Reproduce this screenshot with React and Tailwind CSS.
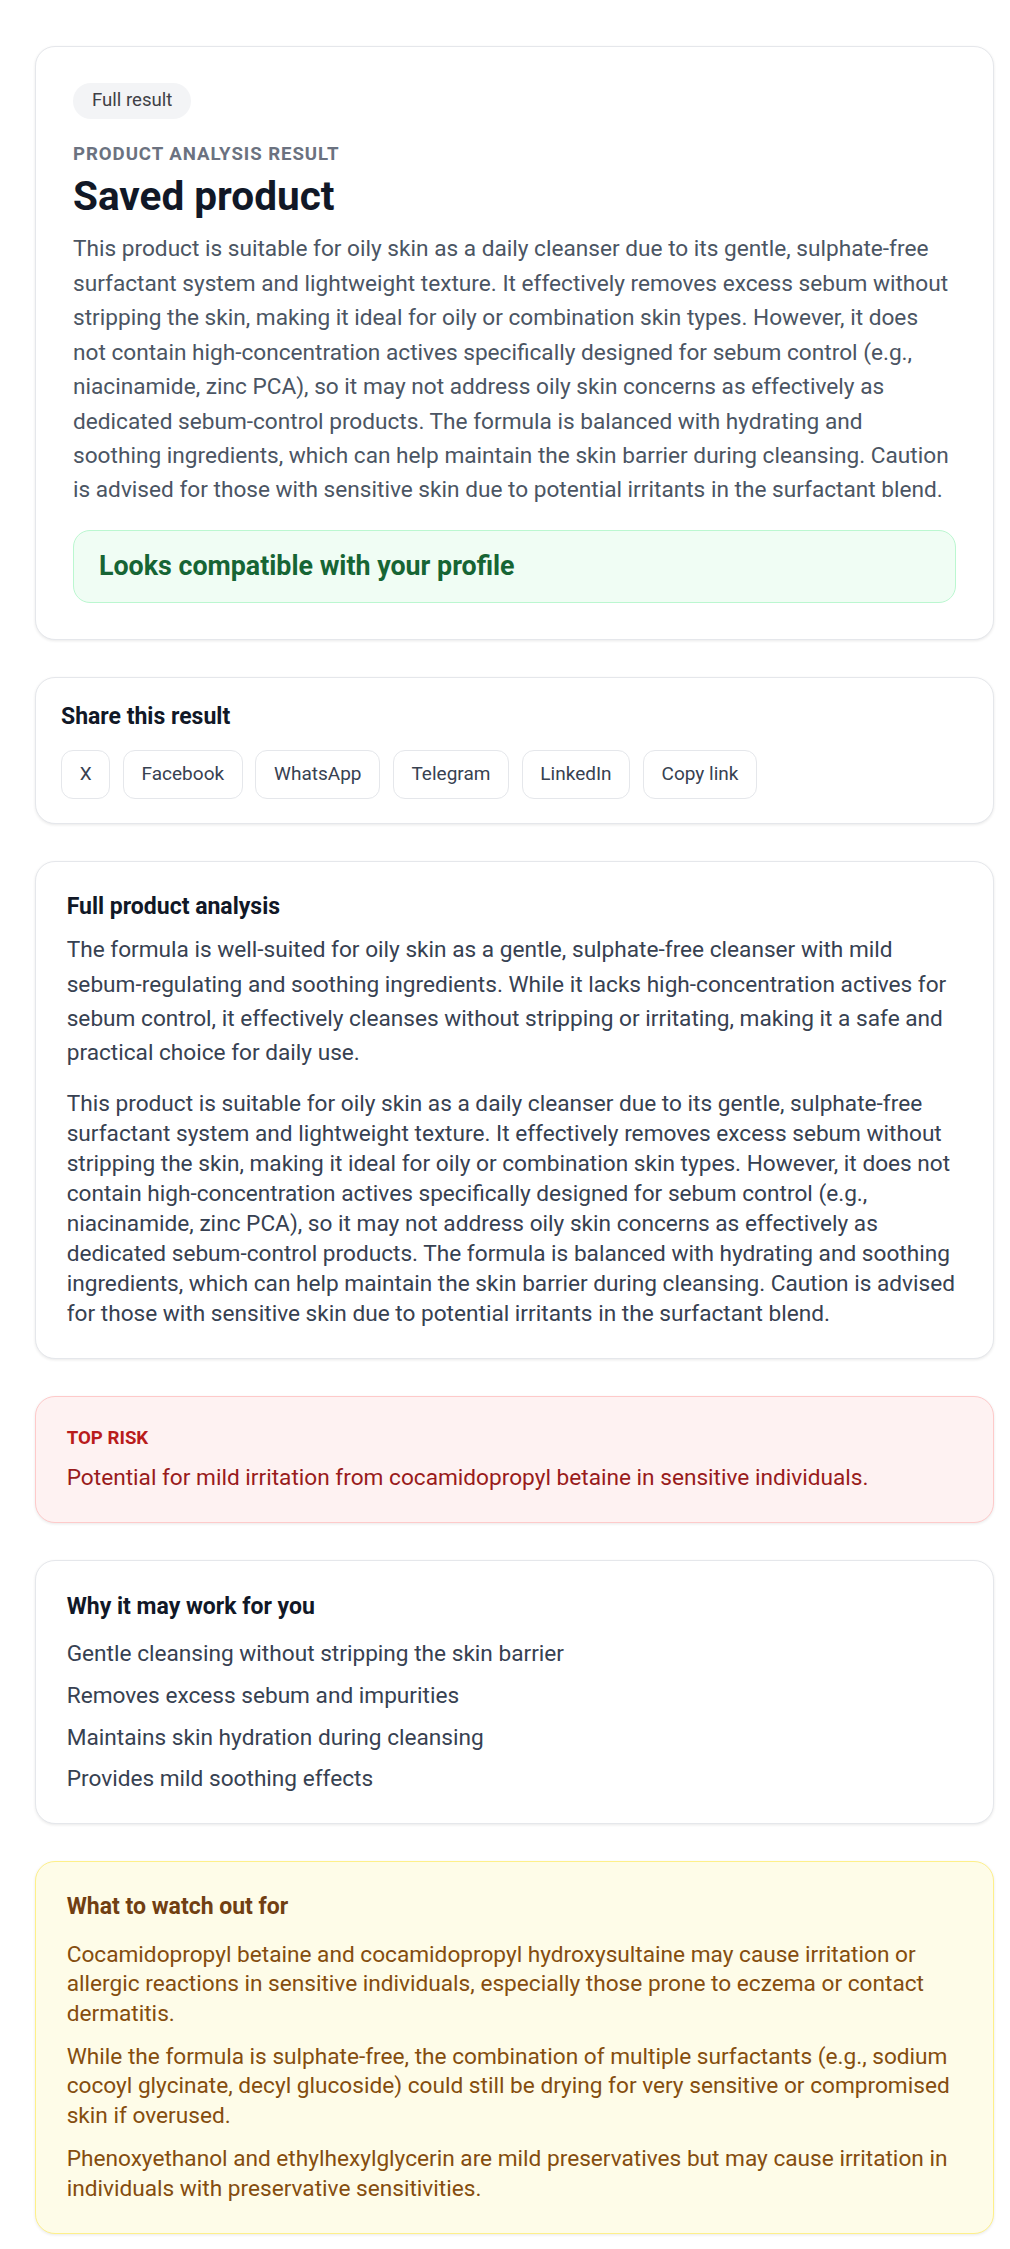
const summary =
  'This product is suitable for oily skin as a daily cleanser due to its gentle, sulphate-free surfactant system and lightweight texture. It effectively removes excess sebum without stripping the skin, making it ideal for oily or combination skin types. However, it does not contain high-concentration actives specifically designed for sebum control (e.g., niacinamide, zinc PCA), so it may not address oily skin concerns as effectively as dedicated sebum-control products. The formula is balanced with hydrating and soothing ingredients, which can help maintain the skin barrier during cleansing. Caution is advised for those with sensitive skin due to potential irritants in the surfactant blend.';

const verdict =
  'The formula is well-suited for oily skin as a gentle, sulphate-free cleanser with mild sebum-regulating and soothing ingredients. While it lacks high-concentration actives for sebum control, it effectively cleanses without stripping or irritating, making it a safe and practical choice for daily use.';

const shareTargets = ['X', 'Facebook', 'WhatsApp', 'Telegram', 'LinkedIn', 'Copy link'];

const benefits = [
  'Gentle cleansing without stripping the skin barrier',
  'Removes excess sebum and impurities',
  'Maintains skin hydration during cleansing',
  'Provides mild soothing effects',
];

const cautions = [
  'Cocamidopropyl betaine and cocamidopropyl hydroxysultaine may cause irritation or allergic reactions in sensitive individuals, especially those prone to eczema or contact dermatitis.',
  'While the formula is sulphate-free, the combination of multiple surfactants (e.g., sodium cocoyl glycinate, decyl glucoside) could still be drying for very sensitive or compromised skin if overused.',
  'Phenoxyethanol and ethylhexylglycerin are mild preservatives but may cause irritation in individuals with preservative sensitivities.',
];

function Card({ className = '', children }) {
  return (
    <section className={`rounded-[20px] border shadow-[0_1px_3px_rgba(0,0,0,0.09)] ${className}`}>
      {children}
    </section>
  );
}

export default function App() {
  return (
    <div className="min-h-screen bg-white font-['Segoe_UI',Roboto,sans-serif] antialiased">
      <main className="flex flex-col gap-[37px] pl-[35px] pr-[16px] pt-[46px] pb-[14px]">
        {/* Result header */}
        <Card className="border-[#e5e7eb] bg-white px-[37px] py-[36px]">
          <span className="flex h-[36px] w-fit items-center rounded-full bg-[#f3f4f6] px-[19px] text-[18.6px] text-[#3f3f46]">
            Full result
          </span>
          <p className="mt-[24px] text-[18.65px] leading-[22.4px] font-bold uppercase tracking-[0.05em] text-[#6b7280]">
            Product analysis result
          </p>
          <h1 className="mt-[7px] text-[40.5px] leading-[48px] font-bold text-[#111827]">Saved product</h1>
          <p className="mt-[12px] text-[22.65px] leading-[34.44px] text-[#4b5563]">{summary}</p>
          <div className="mt-[22px] rounded-[17px] border border-[#bbf7d0] bg-[#f0fdf4] px-[25px] py-[20px]">
            <p className="text-[26.8px] leading-[31px] font-bold text-[#166534]">Looks compatible with your profile</p>
          </div>
        </Card>

        {/* Share */}
        <Card className="border-[#e5e7eb] bg-white px-[25px] pt-[25px] pb-[24px]">
          <h2 className="text-[23px] leading-[27.6px] font-bold text-[#111827]">Share this result</h2>
          <div className="mt-[19.4px] flex flex-wrap gap-[12.6px]">
            {shareTargets.map((name) => (
              <button
                key={name}
                type="button"
                className="flex h-[49px] items-center rounded-[12px] border border-[#e5e7eb] bg-white px-[17.7px] text-[19px] text-[#374151]"
              >
                {name}
              </button>
            ))}
          </div>
        </Card>

        {/* Full analysis */}
        <Card className="border-[#e5e7eb] bg-white px-[30.7px] pt-[31px] pb-[29px]">
          <h2 className="text-[23px] leading-[27.6px] font-bold text-[#111827]">Full product analysis</h2>
          <p className="mt-[12.6px] text-[22.65px] leading-[34.44px] text-[#374151]">{verdict}</p>
          <p className="mt-[18px] text-[22.65px] leading-[30px] text-[#374151]">{summary}</p>
        </Card>

        {/* Top risk */}
        <Card className="border-[#fecaca] bg-[#fef2f2] px-[30.7px] pt-[30px] pb-[29px]">
          <p className="text-[18.65px] leading-[22.4px] font-bold uppercase text-[#b91c1c]">Top risk</p>
          <p className="mt-[13.6px] text-[22.65px] leading-[30px] text-[#991b1b]">
            Potential for mild irritation from cocamidopropyl betaine in sensitive individuals.
          </p>
        </Card>

        {/* Benefits */}
        <Card className="border-[#e5e7eb] bg-white px-[30.7px] pt-[32px] pb-[29px]">
          <h2 className="text-[23px] leading-[27.6px] font-bold text-[#111827]">Why it may work for you</h2>
          <ul className="mt-[19px] flex flex-col gap-[12.1px]">
            {benefits.map((item) => (
              <li key={item} className="text-[22.65px] leading-[29.6px] text-[#374151]">
                {item}
              </li>
            ))}
          </ul>
        </Card>

        {/* Cautions */}
        <Card className="border-[#fef08a] bg-[#fefce8] px-[30.7px] pt-[31.4px] pb-[30px]">
          <h2 className="text-[23px] leading-[27.6px] font-bold text-[#713f12]">What to watch out for</h2>
          <div className="mt-[18.5px] flex flex-col gap-[13.8px]">
            {cautions.map((item) => (
              <p key={item} className="text-[22.65px] leading-[29.5px] text-[#854d0e]">
                {item}
              </p>
            ))}
          </div>
        </Card>
      </main>
    </div>
  );
}
